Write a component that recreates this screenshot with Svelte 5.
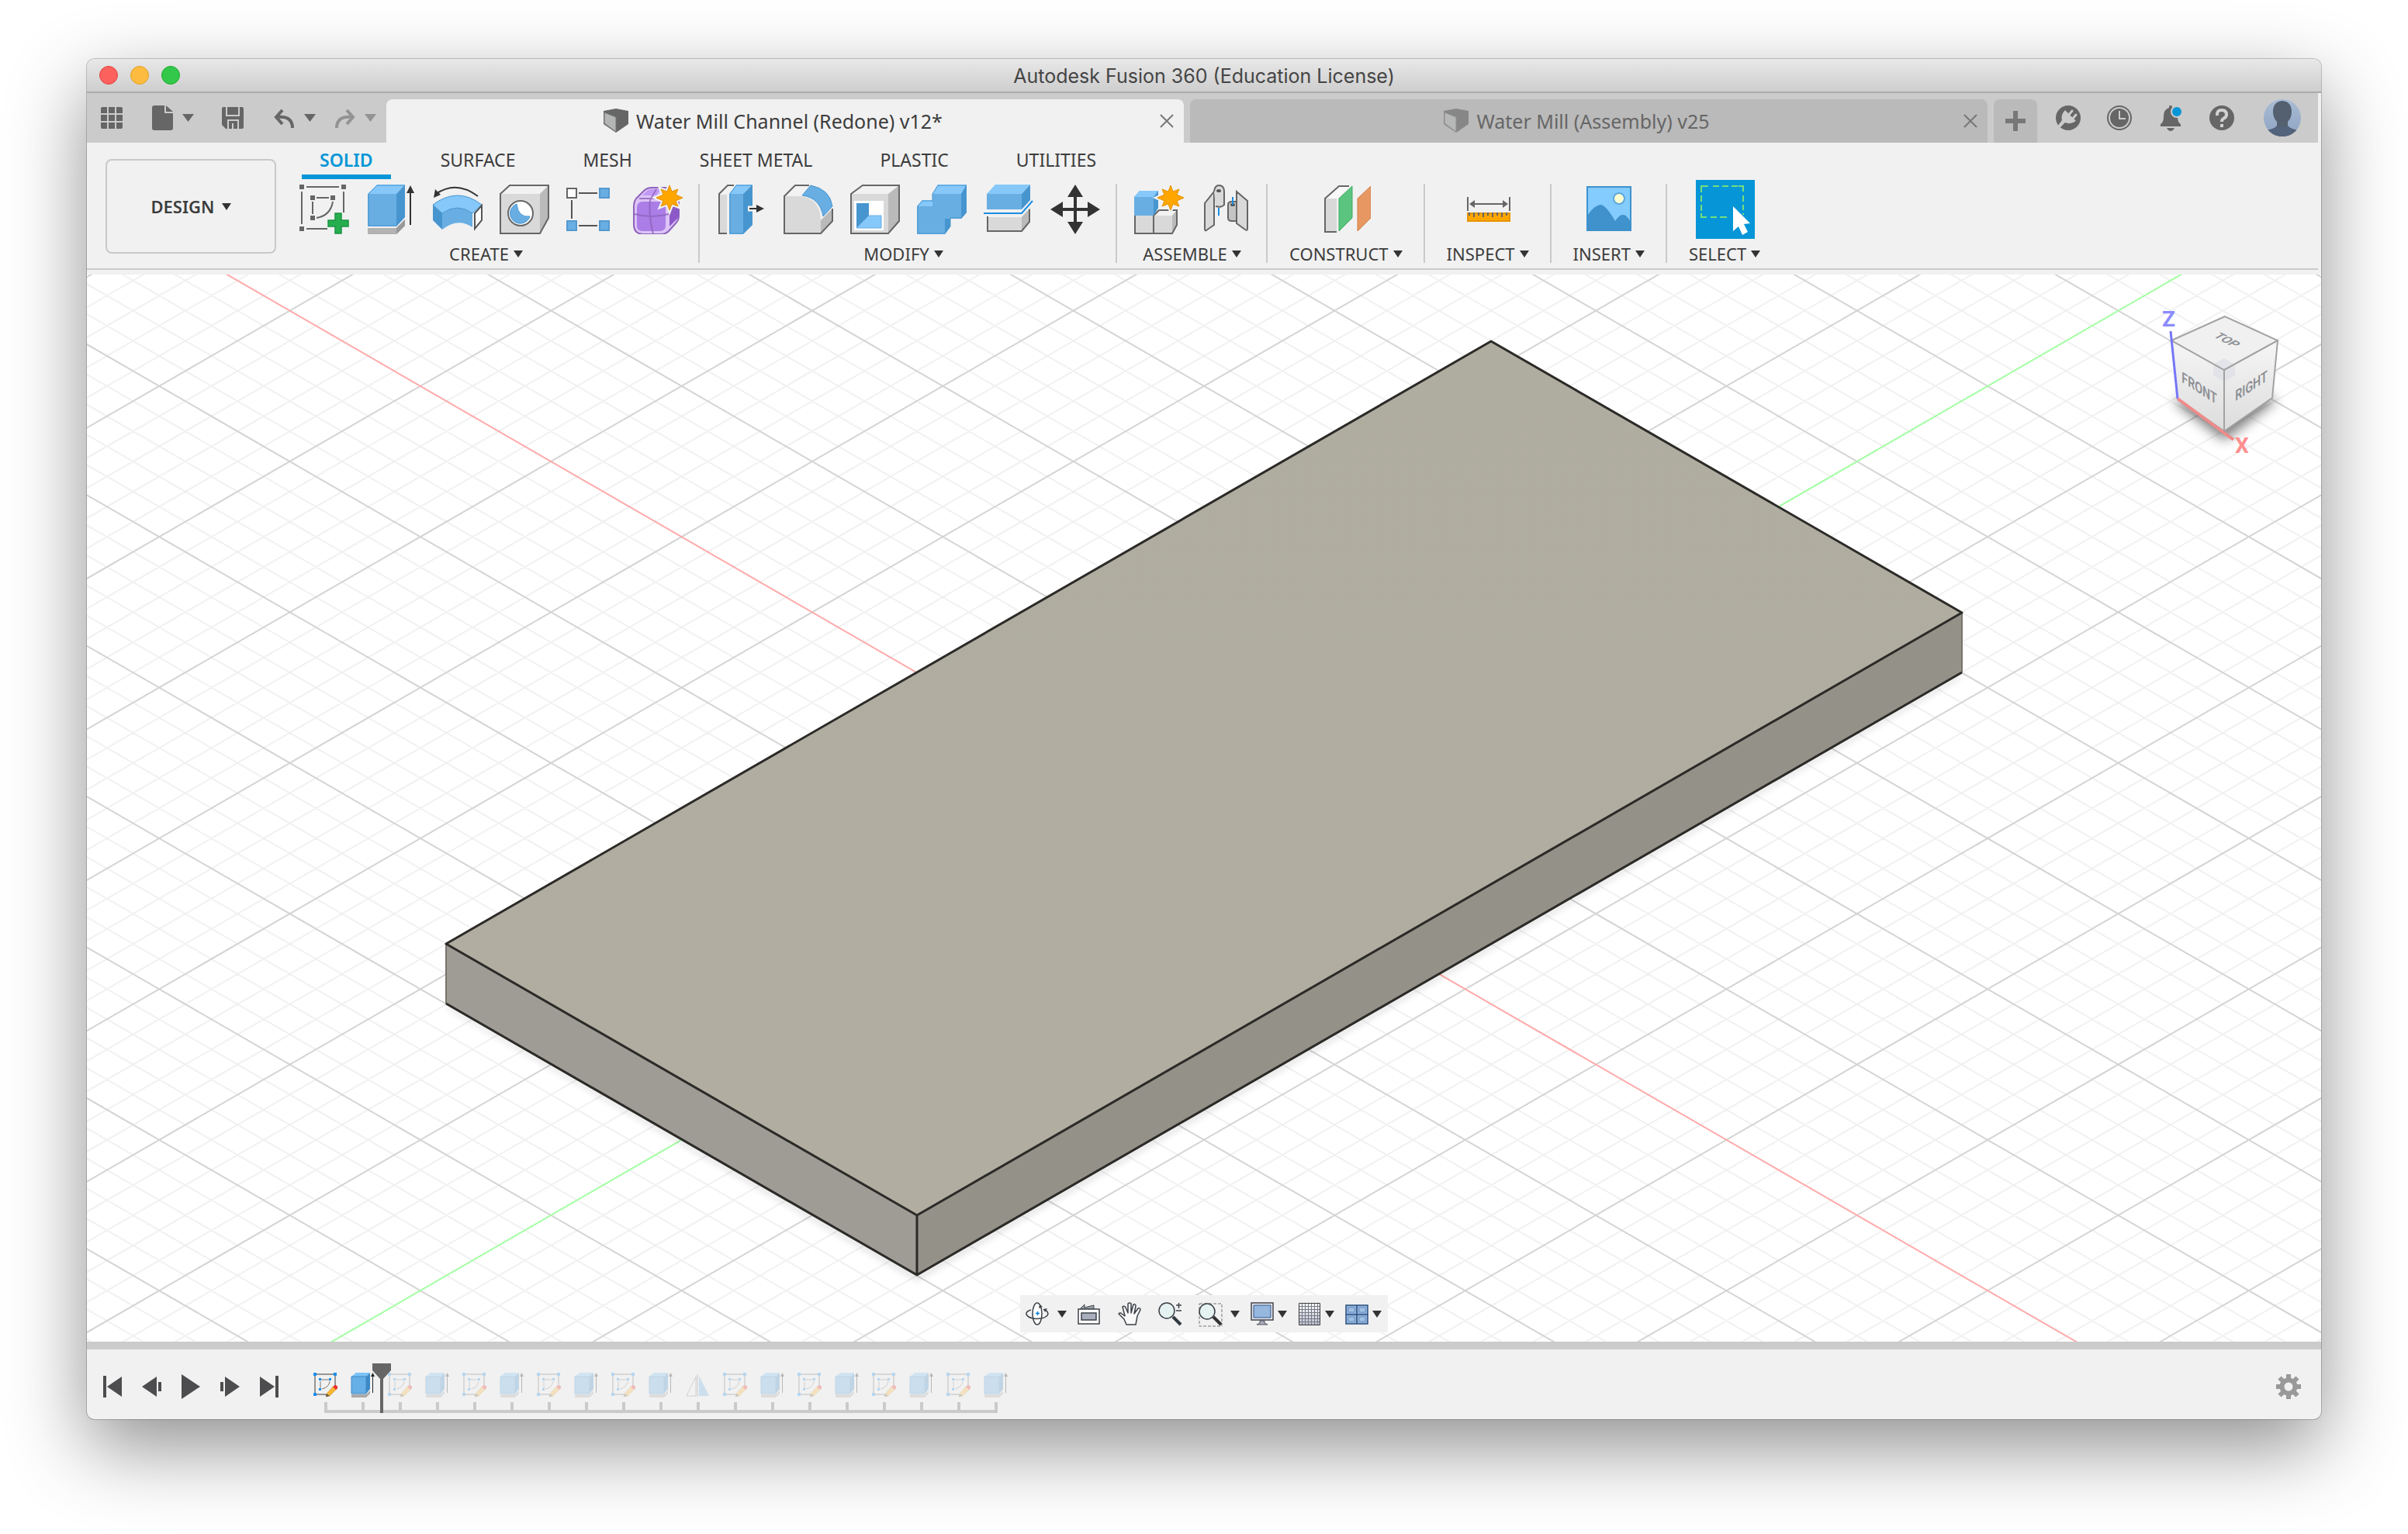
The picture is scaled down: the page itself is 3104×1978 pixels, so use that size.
<script>
  const ribbonTabs = ['SOLID', 'SURFACE', 'MESH', 'SHEET METAL', 'PLASTIC', 'UTILITIES'];

  const groups = [
    { label: 'CREATE', tools: ['sketch', 'extrude', 'revolve', 'hole', 'pattern', 'form'] },
    { label: 'MODIFY', tools: ['presspull', 'fillet', 'shell', 'combine', 'split', 'move'] },
    { label: 'ASSEMBLE', tools: ['component', 'joint'] },
    { label: 'CONSTRUCT', tools: ['plane'] },
    { label: 'INSPECT', tools: ['measure'] },
    { label: 'INSERT', tools: ['canvas'] },
    { label: 'SELECT', tools: ['select'] }
  ];

  const navItems = [
    { name: 'orbit', menu: true, wide: true },
    { name: 'look at' },
    { name: 'pan' },
    { name: 'zoom' },
    { name: 'fit', menu: true, wide: true },
    { name: 'display', menu: true },
    { name: 'grid', menu: true },
    { name: 'viewports', menu: true }
  ];

  const pair = ['sketch', 'extrude'];
  const features = [...pair, ...pair, ...pair, ...pair, ...pair, 'mirror', ...pair, ...pair, ...pair, ...pair];
  const applied = 2;

  // Isometric ground grid: two families of parallel lines through the origin.
  const slope = 0.57737;
  const step = 38.88;
  const reach = 2600;
  function gridPath(major) {
    let d = '';
    for (let k = -70; k <= 70; k++) {
      if (k === 0 || (k % 5 === 0) !== major) continue;
      const c = k * step;
      d += `M${-reach} ${c - slope * reach}L${reach} ${c + slope * reach}`;
      d += `M${-reach} ${c + slope * reach}L${reach} ${c - slope * reach}`;
    }
    return d;
  }
  const minorLines = gridPath(false);
  const majorLines = gridPath(true);
</script>

{#snippet caret()}
  <svg class="caret" viewBox="0 0 12 9" aria-hidden="true"><path d="M0 0H12L6 9Z" /></svg>
{/snippet}

{#snippet docCube()}
  <svg class="doc-cube" viewBox="0 0 32 32" aria-hidden="true">
    <path d="M0 3 16 0 32 3V20L16 31 0 20Z" fill="#666" />
    <path d="M1 5 16 11V30L1 19Z" fill="#b4b6b6" stroke="#777" />
  </svg>
{/snippet}

{#snippet star()}
  <path d="M47 1 50 9 58 6 55 13 64 17 55 21 58 28 50 25 47 33 44 25 36 28 39 21 30 17 39 13 36 6 44 9Z" fill="#ffa600" stroke="#f1f1f1" stroke-width="5" paint-order="stroke" />
  <path d="M47 1 50 9 58 6 55 13 64 17 55 21 58 28 50 25 47 33 44 25 36 28 39 21 30 17 39 13 36 6 44 9Z" fill="#ffa600" stroke="#e59400" stroke-width="1" />
{/snippet}

{#snippet toolIcon(name)}
  {#if name === 'select'}
    <svg class="select-icon" viewBox="0 0 76 76" aria-hidden="true">
      <path d="M0 0H76V76H0Z" fill="#0696d7" />
      <path d="M7 16V8H16M22 8H30M34 8H42M46 8H54M55 8H61V15M61 20V28M61 32V39M7 20V28M7 32V40M7 43V48H14M19 48H27M31 48H40M61 43V45" fill="none" stroke="#75de7c" stroke-width="2" />
      <path d="M48 34 70 56 62 57 67 67 60 71 55 60 48 66Z" fill="#fff" />
    </svg>
  {:else}
    <svg class="tool-icon" viewBox="0 0 64 64" aria-hidden="true">
      {#if name === 'sketch'}
        <path d="M0 0H6V6H0ZM54 0H60V6H54ZM0 54H6V60H0ZM14 14H20V20H14ZM40 14H46V20H40ZM14 40H20V46H14Z" fill="#666" />
        <path d="M9 3H51M3 9V51M9 57H36M57 9V36M22 17H38M17 22V38M43 22Q40 40 22 43" fill="none" stroke="#666" stroke-width="2" />
        <path d="M46 37H54V46H63V54H54V63H46V54H37V46H46Z" fill="#27ae4f" stroke="#1c9442" stroke-width="1.5" />
      {:else if name === 'extrude'}
        <path d="M2 56H39L50 45V53L39 64H2Z" fill="#b2b2b2" /><path d="M39 56 50 45V53L39 64Z" fill="#999" />
        <path d="M2 12 14 0H50L39 12Z" fill="#86c8fa" /><path d="M2 12H39V54H2Z" fill="#68aee3" /><path d="M39 12 50 0V42L39 54Z" fill="#4795cf" />
        <path d="M3 12 14 1H49V42L39 53H3Z" fill="none" stroke="#4795cf" />
        <path d="M57 10V52" stroke="#333" stroke-width="2" /><path d="M57 1 62 11H52Z" fill="#333" />
      {:else if name === 'revolve'}
        <path d="M0 26 12 37V58L0 46Z" fill="#4795cf" />
        <path d="M12 37Q32 23 51 37V55Q32 42 12 58Z" fill="#68aee3" />
        <path d="M0 26Q32 2 63 26L51 37Q32 23 12 37Z" fill="#86c8fa" stroke="#4795cf" />
        <path d="M54 37 63 27V46L54 57Z" fill="#fff" stroke="#555" stroke-width="2" />
        <path d="M4 12Q30-6 58 15" fill="none" stroke="#333" stroke-width="2" /><path d="M1 17 3 6 10 13Z" fill="#333" />
      {:else if name === 'hole'}
        <path d="M1 12 13 1H63V43L52 63H1Z" fill="#f2f2f2" /><path d="M1 12H52V63H1Z" fill="#d9d9d9" /><path d="M52 12 63 1V43L52 63Z" fill="#bababa" />
        <path d="M1 12 13 1H63V43L52 63H1Z" fill="none" stroke="#666" stroke-width="2" />
        <circle cx="27" cy="37" r="16" fill="#fff" stroke="#666" stroke-width="2" />
        <path d="M22 25A13 13 0 1 0 39 41Q24 43 22 25Z" fill="#68aee3" stroke="#4795cf" />
      {:else if name === 'pattern'}
        <path d="M1 5H13V17H1Z" fill="#fff" stroke="#666" stroke-width="2" />
        <path d="M43 5H55V17H43ZM1 47H13V59H1ZM43 47H55V59H43Z" fill="#68aee3" stroke="#5499d0" stroke-width="2" />
        <path d="M16 11H40M7 20V44M16 53H40" stroke="#555" stroke-width="2" />
      {:else if name === 'form'}
        <path d="M1 28Q1 20 6 16L14 8Q18 4 24 4H42Q58 6 59 20V40Q59 46 55 50L46 60Q42 64 36 64H12Q1 63 1 52Z" fill="#dcc4f6" stroke="#8e63bd" stroke-width="2" />
        <path d="M12 14 18 8Q20 6 24 6H36L30 14Z" fill="#c298f5" />
        <path d="M5 29Q6 22 12 22H34Q42 22 42 29V53Q42 60 34 60H12Q5 60 5 53Z" fill="#ab7de6" />
        <path d="M47 32 59 24V42L47 54Z" fill="#8d59c9" />
        <path d="M2 38Q24 44 46 38L58 28M26 64Q20 40 22 20L30 6M8 18H40" fill="none" stroke="#8e63bd" stroke-width="2" opacity=".8" />
        {@render star()}
      {:else if name === 'presspull'}
        <path d="M3 12 14 1H22L13 12V63H3Z" fill="#f2f2f2" /><path d="M3 13H13V63H3Z" fill="#d9d9d9" />
        <path d="M22 1H14L3 12V63H13" fill="none" stroke="#666" stroke-width="2" />
        <path d="M16 12 25 0H46L34 12Z" fill="#86c8fa" /><path d="M16 12H34V64H16Z" fill="#68aee3" /><path d="M34 12 46 0V52L34 64Z" fill="#4795cf" />
        <path d="M17 12 25 1H45V52L34 63H17Z" fill="none" stroke="#4795cf" />
        <path d="M40 31H53" stroke="#f1f1f1" stroke-width="7" /><path d="M42 31H54" stroke="#333" stroke-width="2" /><path d="M61 31 51 26V36Z" fill="#333" />
      {:else if name === 'fillet'}
        <path d="M1 15 15 1H34L24 14Z" fill="#f2f2f2" /><path d="M1 15H22Q47 18 48 46V63H1Z" fill="#d9d9d9" /><path d="M50 44 63 31V47L48 63V46Z" fill="#bababa" />
        <path d="M33 1H15L1 15V63H48L63 47V31" fill="none" stroke="#666" stroke-width="2" />
        <path d="M24 14 35 1Q60 6 63 28L51 41Q47 17 24 14Z" fill="#68aee3" stroke="#4795cf" />
      {:else if name === 'shell'}
        <path d="M1 12 16 1H63V47L49 63H1Z" fill="#f2f2f2" /><path d="M1 12H49V63H1Z" fill="#d9d9d9" /><path d="M49 12 63 1V47L49 63Z" fill="#bababa" />
        <path d="M1 12 16 1H63V47L49 63H1Z" fill="none" stroke="#666" stroke-width="2" />
        <path d="M5 21H43V59H5Z" fill="#fff" /><path d="M8 24H24V40L8 56Z" fill="#4795cf" /><path d="M24 40H40V56H8Z" fill="#86c8fa" stroke="#68aee3" />
      {:else if name === 'combine'}
        <path d="M20 12 27 0H64V36L57 44H43V54L36 64H0V28L7 20H20Z" fill="#68aee3" />
        <path d="M20 12 27 0H64L57 12ZM0 28 7 20H20V28Z" fill="#86c8fa" /><path d="M57 12 64 0V36L57 44ZM36 44H43V54L36 64Z" fill="#4795cf" />
        <path d="M20 12 27 1H63V36L57 43H43V54L36 63H1V28L7 21H20Z" fill="none" stroke="#4795cf" />
      {:else if name === 'split'}
        <path d="M4 12 15 0H60L49 12Z" fill="#86c8fa" /><path d="M4 12H49V32H4Z" fill="#68aee3" /><path d="M49 12 60 0V20L49 32Z" fill="#4795cf" />
        <path d="M4 42H49L60 30V48L49 61H4Z" fill="#d9d9d9" /><path d="M49 42 60 30V48L49 61Z" fill="#bababa" />
        <path d="M5 41V60H49L59 48V32" fill="none" stroke="#666" stroke-width="2" />
        <path d="M0 37H49L63 21" fill="none" stroke="#1a8ee6" stroke-width="2" />
      {:else if name === 'move'}
        <path d="M32 0 42 16H34V30H48V22L64 32 48 42V34H34V48H42L32 64 22 48H30V34H16V42L0 32 16 22V30H30V16H22Z" fill="#333" />
      {:else if name === 'component'}
        <path d="M26 40 32 33H55V52L49 63H1V40Z" fill="#d9d9d9" /><path d="M26 40 32 33H55L49 40Z" fill="#f2f2f2" /><path d="M49 40 55 33V52L49 63Z" fill="#bababa" />
        <path d="M1 40V63H49L55 52V33H32L25 40V63" fill="none" stroke="#666" stroke-width="2" />
        <path d="M0 16 7 8H31V30L24 40H0Z" fill="#68aee3" /><path d="M0 16 7 8H31L26 16Z" fill="#86c8fa" /><path d="M25 16 31 8V30L25 40Z" fill="#4795cf" />
        {@render star()}
      {:else if name === 'joint'}
        <path d="M5 24 17 9V52L7 59Q5 60 5 57Z" fill="#d9d9d9" stroke="#666" stroke-width="2" />
        <path d="M17 9Q18 1 23 1Q30 1 30 9V26Q27 30 19 28" fill="#d9d9d9" stroke="#666" stroke-width="2" /><ellipse cx="23" cy="8" rx="3" ry="2" fill="#555" />
        <path d="M46 9 60 21V57Q60 60 57 58L46 50Z" fill="#d9d9d9" stroke="#666" stroke-width="2" />
        <path d="M35 26Q35 22 40 22H46V47H40Q35 47 35 43Z" fill="#c4c4c4" stroke="#666" stroke-width="2" />
        <ellipse cx="41" cy="26" rx="3" ry="2" fill="#555" /><path d="M23 30V40M41 16V26" stroke="#1a8ee6" stroke-width="2" />
      {:else if name === 'plane'}
        <path d="M5 18 23 2H37L20 18V61H5Z" fill="#f8f8f8" /><path d="M5 18H20V61H5Z" fill="#d9d9d9" />
        <path d="M36 2H23L5 18V61H20" fill="none" stroke="#666" stroke-width="2" />
        <path d="M23 18 40 2V43L23 60Z" fill="#5bc580" stroke="#3faa62" /><path d="M47 18 64 2V43L47 60Z" fill="#e79862" stroke="#cf7f49" />
      {:else if name === 'measure'}
        <path d="M6 16V34M60 16V34M12 25H54" stroke="#666" stroke-width="2" /><path d="M8 25 15 20V30ZM58 25 51 20V30Z" fill="#666" />
        <path d="M6 37H60V47H6Z" fill="#ffa600" stroke="#e59400" stroke-width="2" />
        <path d="M8 36V40M14 36V42M20 36V40M26 36V42M32 36V40M38 36V42M44 36V40M50 36V42M56 36V40" stroke="#666" stroke-width="2" />
      {:else if name === 'canvas'}
        <path d="M4 3H60V59H4Z" fill="#84ccfe" stroke="#3f92cc" stroke-width="2" />
        <circle cx="45" cy="18" r="7" fill="#ffffd2" stroke="#5ba8df" stroke-width="2" />
        <path d="M4 40Q14 26 21 26Q28 26 40 47Q46 38 50 39Q54 38 60 48V59H4Z" fill="#3f92cc" />
      {/if}
    </svg>
  {/if}
{/snippet}

{#snippet navIcon(name)}
  <svg class="nav-icon" viewBox="0 0 30 30" aria-hidden="true">
    {#if name === 'orbit'}
      <ellipse cx="15" cy="15" rx="6" ry="14" fill="#fff" stroke="#3f4449" stroke-width="1.5" />
      <path d="M7 10Q0 12 1 16Q4 21 14 21.500Q28 21 29 15Q28 10 23 9.500" fill="none" stroke="#3f4449" stroke-width="1.500" />
      <path d="M18 3 22 6 17 8ZM28 8 23 9 25 13Z" fill="#3f4449" /><path d="M13 14.500H18M15.500 12V17" stroke="#0a7fe0" stroke-width="1.500" />
    {:else if name === 'look at'}
      <path d="M3 9 9 3V7L21 4V9Z" fill="#9aa3a8" stroke="#3f4449" />
      <path d="M1 9H28V28H1Z" fill="#fff" stroke="#3c4248" stroke-width="1.500" /><path d="M5 14H24V23H5Z" fill="#a9afbc" stroke="#3c4248" stroke-width="1.500" />
    {:else if name === 'pan'}
      <path d="M11 29 8 22 1 15Q3 13 5 15L9 18 6 6Q8 4 10 7L13 14V2Q15 0 17 2V14L20 3Q23 2 23 5L21 15 26 8Q29 7 29 10L25 18 23 29Z" fill="#fafafa" stroke="#3c4248" stroke-width="1.500" stroke-linejoin="round" />
    {:else if name === 'zoom'}
      <path d="M19 19 29 29" stroke="#333b42" stroke-width="4" /><circle cx="11" cy="11" r="10" fill="#e4f2f0" stroke="#3c4248" stroke-width="1.500" />
      <path d="M23 4H30M26.500 1V8M23 11H30" stroke="#3c4248" stroke-width="1.500" />
    {:else if name === 'fit'}
      <path d="M1 2H30V31H1Z" fill="none" stroke="#777" stroke-dasharray="4 2" />
      <path d="M19 19 29 29" stroke="#333" stroke-width="4" /><circle cx="11" cy="12" r="10" fill="#e4f2f0" stroke="#3c4248" stroke-width="1.500" />
    {:else if name === 'display'}
      <path d="M1 1H29V23H1Z" fill="#e6e6ec" stroke="#40454b" stroke-width="1.500" /><path d="M4 4H26V20H4Z" fill="#96b7de" stroke="#2c558c" />
      <path d="M12 24H18V27L22 29H8L12 27Z" fill="#aab" stroke="#555b62" />
    {:else if name === 'grid'}
      <defs><linearGradient id="sheet" x1="0" y1="0" x2="0" y2="1"><stop offset="0" stop-color="#fff" /><stop offset="1" stop-color="#b9bdd0" /></linearGradient></defs>
      <path d="M1.500 1.500H28.500V29.500H1.500Z" fill="url(#sheet)" stroke="#3a3a3a" />
      <path d="M5.500 2V29M9.500 2V29M13.500 2V29M17.500 2V29M21.500 2V29M25.500 2V29M2 5.500H28M2 9.500H28M2 13.500H28M2 17.500H28M2 21.500H28M2 25.500H28" stroke="#777a84" />
    {:else}
      <path d="M1 4H29V28H1Z" fill="#90b4dc" stroke="#2c4f7d" stroke-width="1.500" /><path d="M15 4V28M1 16H29" stroke="#2c4f7d" stroke-width="1.500" />
      <path d="M4 7H12V13H4ZM18 7H26V13H18ZM4 19H12V25H4ZM18 19H26V25H18Z" fill="#a1c1e4" stroke="#6a90bd" />
    {/if}
  </svg>
{/snippet}

{#snippet featureIcon(name)}
  <svg class="feature-icon" viewBox="0 0 32 32" aria-hidden="true">
    {#if name === 'sketch'}
      <path d="M4 2H26M2 4V26M4 28H17M28 4V17" stroke="#777" stroke-width="1.500" /><path d="M10 9H20M9 11V20M21 11Q20 19 11 21" fill="none" stroke="#777" />
      <path d="M0 0H4V4H0ZM26 0H30V4H26ZM0 26H4V30H0ZM7 7H10V10H7ZM20 7H23V10H20ZM7 20H10V23H7Z" fill="#1b90f0" />
      <path d="M17 27 25 18 30 21 21 30 16 31Z" fill="#f8b637" stroke="#c98c20" stroke-width=".5" /><path d="M17 27 21 30 16 31Z" fill="#555" /><path d="M25 18Q29 14 31 18Q32 20 29 22Z" fill="#ee2b2b" />
    {:else if name === 'extrude'}
      <path d="M1 28H20L25 23V27L20 32H1Z" fill="#aaa" /><path d="M1 5 7 0H25L20 5Z" fill="#7cc2f8" /><path d="M1 5H20V27H1Z" fill="#66aee6" stroke="#3d89c6" /><path d="M20 5 25 0V21L20 27Z" fill="#3d89c6" />
      <path d="M28.500 3V26" stroke="#222" /><path d="M28.500 0 31 5H26Z" fill="#222" />
    {:else}
      <path d="M1 30 13 5V30Z" fill="#f8f8f8" stroke="#777" /><path d="M15 2V31" stroke="#aaa" stroke-width="2" /><path d="M17 4 30 30H17Z" fill="#66aee6" />
    {/if}
  </svg>
{/snippet}

<div class="desktop">
  <main class="window">
    <header class="titlebar">
      <div class="lights">
        <button class="light red" aria-label="Close window"></button>
        <button class="light amber" aria-label="Minimise"></button>
        <button class="light green" aria-label="Full screen"></button>
      </div>
      <h1>Autodesk Fusion 360 (Education License)</h1>
    </header>

    <div class="strip">
      <div class="quick">
        <button class="apps" aria-label="Data panel">
          <svg width="28" height="28" viewBox="0 0 28 28"><path d="M2 0H8V8H0V2Q0 0 2 0ZM10 0H18V8H10ZM20 0H26Q28 0 28 2V8H20ZM0 10H8V18H0ZM10 10H18V18H10ZM20 10H28V18H20ZM0 20H8V28H2Q0 28 0 26ZM10 20H18V28H10ZM20 20H28V26Q28 28 26 28H20Z" /></svg>
        </button>
        <button class="file" aria-label="File">
          <svg width="27" height="32" viewBox="0 0 27 32"><path d="M3 0H16V10H27V29Q27 32 24 32H3Q0 32 0 29V3Q0 0 3 0ZM18 0 27 8H18Z" /></svg>
          <svg width="15" height="10" viewBox="0 0 15 10"><path d="M0 0H15L7.500 10Z" /></svg>
        </button>
        <button class="save" aria-label="Save">
          <svg width="28" height="28" viewBox="0 0 28 28"><path d="M2 0H26Q28 0 28 2V26Q28 28 26 28H5L0 23V2Q0 0 2 0Z" /><path d="M5 0H7V12H5ZM21 0H23V12H21ZM5 10H23V12H5ZM7 16H22V18H7ZM7 16H9V28H7ZM20 16H22V28H20ZM13 21H15V28H13Z" fill="#cbcbcb" /></svg>
        </button>
        <button class="undo" aria-label="Undo">
          <svg width="27" height="25" viewBox="0 0 27 25"><path d="M11 2 3 11 11 20M4 11Q24 9 24 25" fill="none" stroke="#666" stroke-width="4" /></svg>
          <svg width="15" height="10" viewBox="0 0 15 10"><path d="M0 0H15L7.500 10Z" /></svg>
        </button>
        <button class="redo" aria-label="Redo">
          <svg width="27" height="25" viewBox="0 0 27 25"><path d="M16 2 24 11 16 20M23 11Q3 9 3 25" fill="none" stroke="#666" stroke-width="4" /></svg>
          <svg width="15" height="10" viewBox="0 0 15 10"><path d="M0 0H15L7.500 10Z" /></svg>
        </button>
      </div>

      <div class="doc-tab active">
        <button class="doc-name">{@render docCube()}<span>Water Mill Channel (Redone) v12*</span></button>
        <button class="close" aria-label="Close Water Mill Channel"><svg width="18" height="18" viewBox="0 0 18 18"><path d="M1 1 17 17M17 1 1 17" /></svg></button>
      </div>
      <div class="doc-tab">
        <button class="doc-name">{@render docCube()}<span>Water Mill (Assembly) v25</span></button>
        <button class="close" aria-label="Close Water Mill Assembly"><svg width="18" height="18" viewBox="0 0 18 18"><path d="M1 1 17 17M17 1 1 17" /></svg></button>
      </div>
      <button class="new-tab" aria-label="New design"><svg width="26" height="26" viewBox="0 0 26 26"><path d="M10 0H16V10H26V16H16V26H10V16H0V10H10Z" fill="#777" /></svg></button>

      <div class="account">
        <button aria-label="Extensions">
          <svg width="34" height="34" viewBox="0 0 34 34"><circle cx="17" cy="17" r="16" /><path d="M13 7 27 21Q20 26 13 23L5 31 3 28 9 20Q7 13 13 7Z" fill="#cbcbcb" /><path d="M17 14 22 8M22 19 27 13" stroke="#cbcbcb" stroke-width="3" stroke-linecap="round" /></svg>
        </button>
        <button aria-label="Job status">
          <svg width="34" height="34" viewBox="0 0 34 34"><circle cx="17" cy="17" r="15" fill="none" stroke="#666" stroke-width="2" /><circle cx="17" cy="17" r="12" /><path d="M17 8V18H25" fill="none" stroke="#cbcbcb" stroke-width="2" /></svg>
        </button>
        <button aria-label="Notifications">
          <svg width="34" height="34" viewBox="0 0 34 34"><path d="M15 2Q17 0 19 2V4Q26 6 26 15Q26 23 30 25V28H4V25Q8 23 8 15Q8 6 15 4ZM12 30H22Q20 34 17 34Q14 34 12 30Z" /><circle cx="25" cy="9" r="8" fill="#cbcbcb" /><circle cx="25" cy="9" r="6" fill="#0696d7" /></svg>
        </button>
        <button aria-label="Help">
          <svg width="34" height="34" viewBox="0 0 34 34"><circle cx="17" cy="17" r="16" /><path d="M11 14Q10 7 17 7Q23 7 23 13Q23 16 19 18Q17 19 17 22" fill="none" stroke="#d2d2d2" stroke-width="4" /><path d="M15 25H19V29H15Z" fill="#d2d2d2" /></svg>
        </button>
        <button class="avatar" aria-label="Account">
          <svg width="48" height="48" viewBox="0 0 48 48">
            <defs><linearGradient id="sky" x1="0" y1="0" x2="0" y2="1"><stop offset="0" stop-color="#a9bdd6" /><stop offset="1" stop-color="#8ea3c1" /></linearGradient><clipPath id="round"><circle cx="24" cy="24" r="24" /></clipPath></defs>
            <g clip-path="url(#round)"><path d="M0 0H48V48H0Z" fill="url(#sky)" /><path d="M17 34V29Q12 24 12 16Q12 3 24 2Q36 3 36 16Q36 24 31 29V34Q33 38 45 40V48H3V40Q15 38 17 34Z" fill="#54606f" /><path d="M3 40Q15 38 17 34Q24 38 31 34Q33 38 45 40V48H3Z" fill="#52637b" /></g>
          </svg>
        </button>
      </div>
    </div>

    <section class="ribbon">
      <button class="workspace">DESIGN {@render caret()}</button>
      <div class="ribbon-main">
        <nav class="ribbon-tabs">
          {#each ribbonTabs as tab, i}
            <button class:current={i === 0}>{tab}</button>
          {/each}
        </nav>
        <div class="groups">
          {#each groups as group}
            <div class="group">
              <div class="tools">
                {#each group.tools as tool}
                  <button aria-label={tool}>{@render toolIcon(tool)}</button>
                {/each}
              </div>
              <button class="group-label">{group.label}{@render caret()}</button>
            </div>
          {/each}
        </div>
      </div>
    </section>

    <section class="stage">
      <svg class="scene" viewBox="-1440 -727 2880 1376" preserveAspectRatio="xMidYMid slice" role="img" aria-label="Rectangular slab on the ground grid">
        <defs>
          <linearGradient id="slabTop" x1="0" y1="0" x2="0" y2="1"><stop offset="0" stop-color="#afaca0" /><stop offset="1" stop-color="#b1ada1" /></linearGradient>
          <filter id="soft" x="-10%" y="-10%" width="120%" height="120%"><feGaussianBlur stdDeviation="5" /></filter>
        </defs>
        <path class="minor" d={minorLines} />
        <path class="major" d={majorLines} />
        <path d="M-2600 -1501 2600 1501" stroke="#ffa9a9" stroke-width="2" />
        <path d="M-2600 1501 2600 -1501" stroke="#a3ffa3" stroke-width="2" />
        <path d="M-977 213-370 563 977-214 973-206-370 570-972 221Z" fill="#000" opacity=".15" filter="url(#soft)" />
        <path d="M-977 136-370 486V563L-977 213Z" fill="#9f9c95" />
        <path d="M-370 486 977-291V-214L-370 563Z" fill="#949188" />
        <path d="M-977 136 370-641 977-291-370 486Z" fill="url(#slabTop)" />
        <path d="M-977 136V213M977-291V-214" stroke="#77756f" stroke-width="2" />
        <path d="M-977 136 370-641 977-291-370 486ZM-370 486V563M-977 213-370 563 977-214" fill="none" stroke="#2b2a27" stroke-width="3" stroke-linejoin="round" />
      </svg>

      <svg class="viewcube" viewBox="0 0 170 200" role="img" aria-label="View cube">
        <defs>
          <filter id="haze" x="-30%" y="-30%" width="160%" height="160%"><feGaussianBlur stdDeviation="8" /></filter>
          <linearGradient id="side" x1="0" y1="0" x2="0" y2="1"><stop offset="0" stop-color="#f6f6f6" /><stop offset="1" stop-color="#dcdcdc" /></linearGradient>
        </defs>
        <path d="M22 122 87 90 155 120 87 172Z" opacity=".5" filter="url(#haze)" />
        <path d="M19 43 87 81V160L27 118Z" fill="url(#side)" />
        <path d="M156 43 87 81V160L149 117Z" fill="url(#side)" />
        <path d="M88 12 19 43 87 81 156 43Z" fill="#f0f0f0" />
        <path d="M87 66 101 74V88L87 96 73 88V74Z" fill="#d9dce4" opacity=".6" />
        <path d="M88 12 19 43 87 81 156 43ZM87 81V160M27 118 87 160 149 117 156 43" fill="none" stroke="#a2a2a2" stroke-width="2" />
        <path d="M18 31 27 118" stroke="#7676f8" stroke-width="3" />
        <path d="M27 118 99 171" stroke="#f08a8a" stroke-width="4" />
        <text class="axis z" x="7" y="25">Z</text>
        <text class="axis x" x="101" y="188">X</text>
        <text class="face" transform="matrix(.75 .4 -.75 .4 86 45)">TOP</text>
        <text class="face" transform="matrix(.75 .49 0 1 55 111)">FRONT</text>
        <text class="face" transform="matrix(.75 -.49 0 1 122 108)">RIGHT</text>
      </svg>

      <div class="navbar">
        {#each navItems as item}
          <button class:menu={item.menu} class:wide={item.wide} aria-label={item.name}>
            {@render navIcon(item.name)}{#if item.menu}{@render caret()}{/if}
          </button>
        {/each}
      </div>
    </section>

    <footer class="timeline">
      <div class="player">
        <button aria-label="Go to start"><svg viewBox="0 0 26 32"><path d="M0 2H4V30H0ZM5 16 24 3V29Z" /></svg></button>
        <button aria-label="Step back"><svg viewBox="0 0 26 32"><path d="M0 16 19 3V29ZM21 10H25V22H21Z" /></svg></button>
        <button aria-label="Play"><svg viewBox="0 0 26 32"><path d="M1 0 25 16 1 32Z" /></svg></button>
        <button aria-label="Step forward"><svg viewBox="0 0 26 32"><path d="M26 16 7 3V29ZM1 10H5V22H1Z" /></svg></button>
        <button aria-label="Go to end"><svg viewBox="0 0 26 32"><path d="M2 3 21 16 2 29ZM22 2H26V30H22Z" /></svg></button>
      </div>
      <div class="track">
        {#each features as feature, i}
          <button class="feature" class:pending={i >= applied} aria-label={feature}>
            {@render featureIcon(feature)}
            <span class="tick"></span>
            {#if i === applied - 1}
              <svg class="marker" viewBox="0 0 24 64" aria-hidden="true"><path d="M0 0H24V9L14 20V64H10V20L0 9Z" /></svg>
            {/if}
          </button>
        {/each}
      </div>
      <button class="settings" aria-label="Timeline settings">
        <svg width="32" height="32" viewBox="0 0 32 32"><circle cx="16" cy="16" r="8.500" fill="none" stroke="#999" stroke-width="6" /><path d="M16 0V6M16 26V32M0 16H6M26 16H32M4.500 4.500 9 9M23 23 27.500 27.500M4.500 27.500 9 23M23 9 27.500 4.500" stroke="#999" stroke-width="6" /></svg>
      </button>
    </footer>
  </main>
</div>

<style>
  :global(body) {
    margin: 0;
    background: #fff;
    font-family: 'Noto Sans', 'Open Sans', sans-serif;
    color: #3c3c3c;
  }
  button {
    margin: 0;
    padding: 0;
    border: 0;
    background: none;
    font: inherit;
    color: inherit;
    display: flex;
    align-items: center;
  }
  svg { display: block; flex: none; }
  .desktop {
    box-sizing: border-box;
    min-height: 100vh;
    padding: 76px 112px 148px;
    display: flex;
    overflow: hidden;
  }
  .window {
    flex: 1;
    min-width: 0;
    display: flex;
    flex-direction: column;
    border-radius: 10px;
    overflow: hidden;
    background: #f1f1f1;
    box-shadow: 0 0 0 1px rgba(0, 0, 0, 0.2), 0 36px 100px rgba(0, 0, 0, 0.44);
  }

  .titlebar {
    height: 42px;
    border-bottom: 2px solid #ababab;
    background: linear-gradient(#e8e8e8, #cecece);
    display: grid;
    grid-template-columns: 1fr auto 1fr;
    align-items: center;
  }
  .lights { display: flex; gap: 16px; padding-left: 16px; }
  .light { box-sizing: border-box; width: 24px; height: 24px; border-radius: 50%; border: 1px solid; }
  .red { background: #fc615d; border-color: #e2463f; }
  .amber { background: #fdbc40; border-color: #dfa023; }
  .green { background: #34c84a; border-color: #1fab2f; }
  h1 {
    margin: 0;
    padding-top: 2px;
    font: 400 25px/40px Inter, sans-serif;
    color: #454545;
  }

  .strip {
    height: 64px;
    margin-right: 4px;
    background: #cbcbcb;
    display: flex;
    align-items: flex-end;
    font-size: 25px;
    line-height: 32px;
  }
  .quick { height: 64px; width: 386px; display: flex; align-items: center; padding-left: 18px; box-sizing: border-box; fill: #666; }
  .quick button { gap: 12px; }
  .apps { width: 66px; }
  .file { width: 90px; }
  .save { width: 67px; }
  .undo { width: 78px; }
  .redo { opacity: 0.55; }
  .doc-tab {
    flex: 1;
    height: 56px;
    margin-right: 8px;
    border-radius: 8px 8px 0 0;
    background: #bababa;
    color: #666;
    display: flex;
    align-items: center;
    padding-right: 13px;
  }
  .doc-tab.active { background: #f1f1f1; color: #3c3c3c; }
  .doc-name { flex: 1; justify-content: center; gap: 10px; }
  .doc-cube { width: 32px; height: 32px; opacity: 0.6; }
  .active .doc-cube { opacity: 1; }
  .close { fill: none; stroke: #777; stroke-width: 2; }
  .new-tab { width: 56px; height: 56px; border-radius: 8px 8px 0 0; background: #bababa; justify-content: center; }
  .account { height: 64px; display: flex; align-items: center; gap: 32px; padding: 0 22px 0 23px; fill: #666; }
  .avatar { margin-left: 5px; }

  .ribbon {
    height: 162px;
    border-bottom: 2px solid #cacaca;
    margin: 0 4px 6px 0;
    display: flex;
    align-items: flex-start;
    font-size: 22px;
    line-height: 24px;
  }
  .caret { width: 12px; height: 9px; fill: #333; }
  .workspace {
    box-sizing: border-box;
    width: 220px;
    height: 122px;
    margin: 21px 8px 0 24px;
    border: 2px solid #c9c9c9;
    border-radius: 8px;
    font-weight: 600;
    justify-content: center;
    gap: 9px;
  }
  .ribbon-tabs { display: flex; gap: 41px; padding-left: 25px; margin-bottom: 6px; font-size: 23px; }
  .ribbon-tabs button { padding: 10px 23px 7px; border-bottom: 6px solid transparent; }
  .ribbon-tabs .current { color: #0696d7; font-weight: 600; border-color: #0696d7; }
  .groups { display: flex; }
  .group {
    box-sizing: border-box;
    height: 102px;
    padding: 1px 20px 0 22px;
    border-right: 2px solid #cacaca;
    display: flex;
    flex-direction: column;
    align-items: center;
    gap: 13px;
  }
  .group:last-child { border: 0; }
  .tools { height: 64px; display: flex; align-items: center; gap: 22px; }
  .tool-icon { width: 64px; height: 64px; }
  .select-icon { width: 76px; height: 76px; }
  .group-label { gap: 6px; padding: 0 7px 0 6px; }
  .group:nth-child(-n + 2) .group-label { margin-right: 12px; }

  .stage { flex: 1; min-height: 0; position: relative; background: #fff; overflow: hidden; display: flex; align-items: flex-end; justify-content: center; }
  .scene { position: absolute; inset: 0; width: 100%; height: 100%; }
  .minor { fill: none; stroke: #f1f1f1; stroke-width: 2; }
  .major { fill: none; stroke: #d4d4d4; stroke-width: 2; }
  .viewcube { position: absolute; top: 42px; right: 42px; width: 170px; height: 200px; overflow: visible; }
  .axis { font: 700 28px Roboto, sans-serif; }
  .z { fill: #8c8cff; }
  .x { fill: #ff8f8f; }
  .face { font: 600 19px Roboto, sans-serif; fill: #8c8f94; text-anchor: middle; }

  .navbar { position: relative; margin-bottom: 12px; height: 48px; background: #f1f1f1; display: flex; align-items: center; padding: 0 8px 0 7px; }
  .navbar button { margin-right: 22px; gap: 5px; }
  .navbar .menu { margin-right: 14px; }
  .navbar .wide { gap: 11px; }
  .navbar button:last-child { margin-right: 0; }
  .nav-icon { width: 30px; height: 30px; overflow: visible; }

  .timeline { height: 90px; border-top: 10px solid #cbcbcb; display: flex; align-items: flex-start; }
  .player { display: flex; gap: 24px; padding: 32px 0 0 21px; fill: #4d4d4f; }
  .player svg { width: 26px; height: 32px; }
  .track { flex: 1; display: flex; padding: 30px 0 0 37px; }
  .feature { position: relative; width: 48px; flex-direction: column; gap: 6px; }
  .feature-icon { width: 32px; height: 32px; }
  .pending .feature-icon { opacity: 0.27; }
  .tick { width: 48px; height: 14px; background: linear-gradient(#cacaca, #cacaca) center / 4px 14px no-repeat, linear-gradient(#cacaca, #cacaca) bottom / 100% 4px no-repeat; }
  .feature:first-child .tick { background-size: 4px 14px, 26px 4px; background-position: center, right bottom; }
  .feature:last-child .tick { background-size: 4px 14px, 26px 4px; background-position: center, left bottom; }
  .marker { position: absolute; left: 36px; top: -12px; width: 24px; height: 64px; fill: #666; z-index: 1; }
  .settings { margin: 32px 26px 0 0; }
</style>
